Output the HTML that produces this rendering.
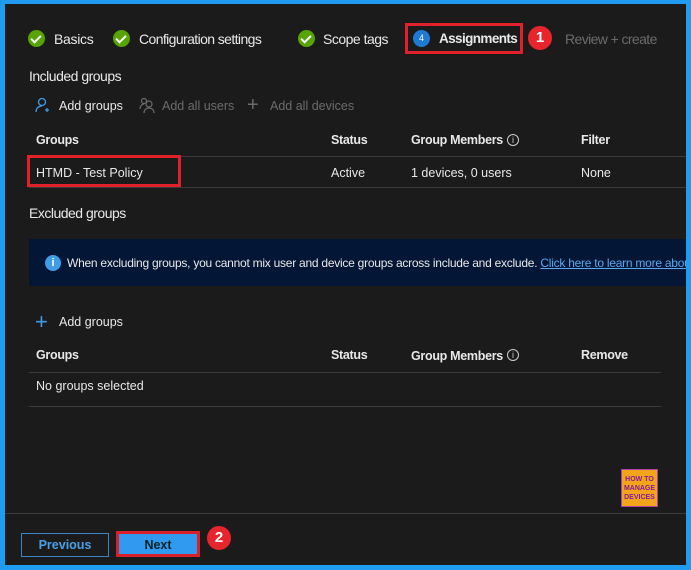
<!DOCTYPE html>
<html><head><meta charset="utf-8"><style>
*{margin:0;padding:0;box-sizing:border-box}
body{width:691px;height:570px;background:#1f9bf0;position:relative;overflow:hidden;font-family:"Liberation Sans",sans-serif;font-size:12.5px;color:#e8e8e8}
#m{position:absolute;left:5px;top:4px;width:681px;height:561px;background:#1b1b1b}
.a{position:absolute;white-space:nowrap}
.b{font-weight:bold;letter-spacing:-0.3px}
.ck{position:absolute;width:17px;height:17px;border-radius:50%;background:#57a300}
.ck:after{content:"";position:absolute;left:5px;top:3px;width:4px;height:8px;border:solid #fff;border-width:0 2px 2px 0;transform:rotate(45deg)}
.ln{position:absolute;height:1px;background:#3b3b3b}
.red{position:absolute;border:3px solid #e0202a}
.rc{position:absolute;width:24px;height:24px;border-radius:50%;background:#e8242c;color:#fff;font-weight:bold;font-size:15px;text-align:center;line-height:24px}
.info{position:absolute;width:12px;height:12px;border:1px solid #ccc;border-radius:50%;font-size:9px;text-align:center;line-height:10px;color:#ccc}
.t{font-size:14px;letter-spacing:-0.3px}
</style></head><body>
<div id="m"></div>
<div class="ck" style="left:28px;top:30px"></div><div class="a t" style="left:54px;top:31px">Basics</div>
<div class="ck" style="left:113px;top:30px"></div><div class="a t" style="left:139px;top:31px;letter-spacing:-0.6px">Configuration settings</div>
<div class="ck" style="left:298px;top:30px"></div><div class="a t" style="left:323px;top:31px;letter-spacing:-0.5px">Scope tags</div>
<div class="a" style="left:413px;top:30px;width:17px;height:17px;border-radius:50%;background:#1f7ad6;color:#fff;font-size:9px;text-align:center;line-height:17px">4</div>
<div class="a b" style="left:439px;top:31px;font-size:13.5px;letter-spacing:-0.6px">Assignments</div>
<div class="red" style="left:405px;top:23px;width:118px;height:31px"></div>
<div class="rc" style="left:528px;top:26px">1</div>
<div class="a t" style="left:565px;top:31px;color:#6b6b6b;letter-spacing:-0.6px">Review + create</div>
<div class="a t" style="left:29px;top:68px;letter-spacing:-0.5px">Included groups</div>
<svg class="a" style="left:35px;top:97px" width="16" height="16" viewBox="0 0 16 16" fill="none" stroke="#3f9ce8" stroke-width="1.3"><circle cx="7" cy="5" r="3.5"/><path d="M1 15c0-4 3-6 6-6"/><path d="M12 11v4M10 13h4"/></svg>
<div class="a" style="left:59px;top:99px">Add groups</div>
<svg class="a" style="left:139px;top:97px" width="16" height="16" viewBox="0 0 16 16" fill="none" stroke="#6b6b6b" stroke-width="1.2"><circle cx="5" cy="4" r="2.5"/><circle cx="10" cy="7" r="3"/><path d="M1 12c0-3 2-5 4-5M5 16c0-3 2-5 5-5s5 2 5 5"/></svg>
<div class="a" style="left:162px;top:99px;color:#6b6b6b">Add all users</div>
<div class="a" style="left:247px;top:94px;font-size:20px;color:#6b6b6b;font-weight:300">+</div>
<div class="a" style="left:270px;top:99px;color:#6b6b6b">Add all devices</div>
<div class="a b" style="left:36px;top:133px">Groups</div>
<div class="a b" style="left:331px;top:133px">Status</div>
<div class="a b" style="left:411px;top:133px">Group Members</div><div class="info" style="left:507px;top:134px">i</div>
<div class="a b" style="left:581px;top:133px">Filter</div>
<div class="ln" style="left:29px;top:156px;width:657px"></div>
<div class="a" style="left:36px;top:166px">HTMD - Test Policy</div>
<div class="red" style="left:27px;top:155px;width:154px;height:32px"></div>
<div class="a" style="left:331px;top:166px">Active</div>
<div class="a" style="left:411px;top:166px">1 devices, 0 users</div>
<div class="a" style="left:581px;top:166px">None</div>
<div class="ln" style="left:29px;top:187px;width:657px"></div>
<div class="a t" style="left:29px;top:205px;letter-spacing:-0.5px">Excluded groups</div>
<div class="a" style="left:29px;top:239px;width:657px;height:47px;background:#031636"></div>
<div class="a" style="left:45px;top:255px;width:16px;height:16px;border-radius:50%;background:#3f9ce8;color:#fff;font-weight:bold;font-size:11px;text-align:center;line-height:16px">i</div>
<div class="a" style="left:67px;top:256px;font-size:12px;letter-spacing:-0.25px;width:619px;overflow:hidden">When excluding groups, you cannot mix user and device groups across include and exclude. <span style="color:#56a8f0;text-decoration:underline">Click here to learn more about</span></div>
<div class="a" style="left:35px;top:309px;font-size:22px;color:#3f9ce8;font-weight:300">+</div>
<div class="a" style="left:59px;top:315px">Add groups</div>
<div class="a b" style="left:36px;top:348px">Groups</div>
<div class="a b" style="left:331px;top:348px">Status</div>
<div class="a b" style="left:411px;top:349px">Group Members</div><div class="info" style="left:507px;top:349px">i</div>
<div class="a b" style="left:581px;top:348px">Remove</div>
<div class="ln" style="left:29px;top:372px;width:632px"></div>
<div class="a" style="left:36px;top:379px">No groups selected</div>
<div class="ln" style="left:29px;top:406px;width:632px"></div>
<div class="a" style="left:621px;top:469px;width:37px;height:38px;background:#f2a51a;border:1px solid #b040b0;color:#8a1a9a;font-size:7px;font-weight:bold;text-align:center;line-height:9px;padding-top:5px">HOW TO<br>MANAGE<br>DEVICES</div>
<div class="ln" style="left:5px;top:513px;width:681px"></div>
<div class="a" style="left:21px;top:533px;width:88px;height:24px;border:1px solid #3a86c8;color:#4aa0e8;font-weight:bold;text-align:center;line-height:22px">Previous</div>
<div class="a" style="left:116px;top:531px;width:84px;height:26px;background:#2f9af0;border:3px solid #d81f2a;color:#122;font-weight:bold;text-align:center;line-height:22px">Next</div>
<div class="rc" style="left:207px;top:526px">2</div>
</body></html>
